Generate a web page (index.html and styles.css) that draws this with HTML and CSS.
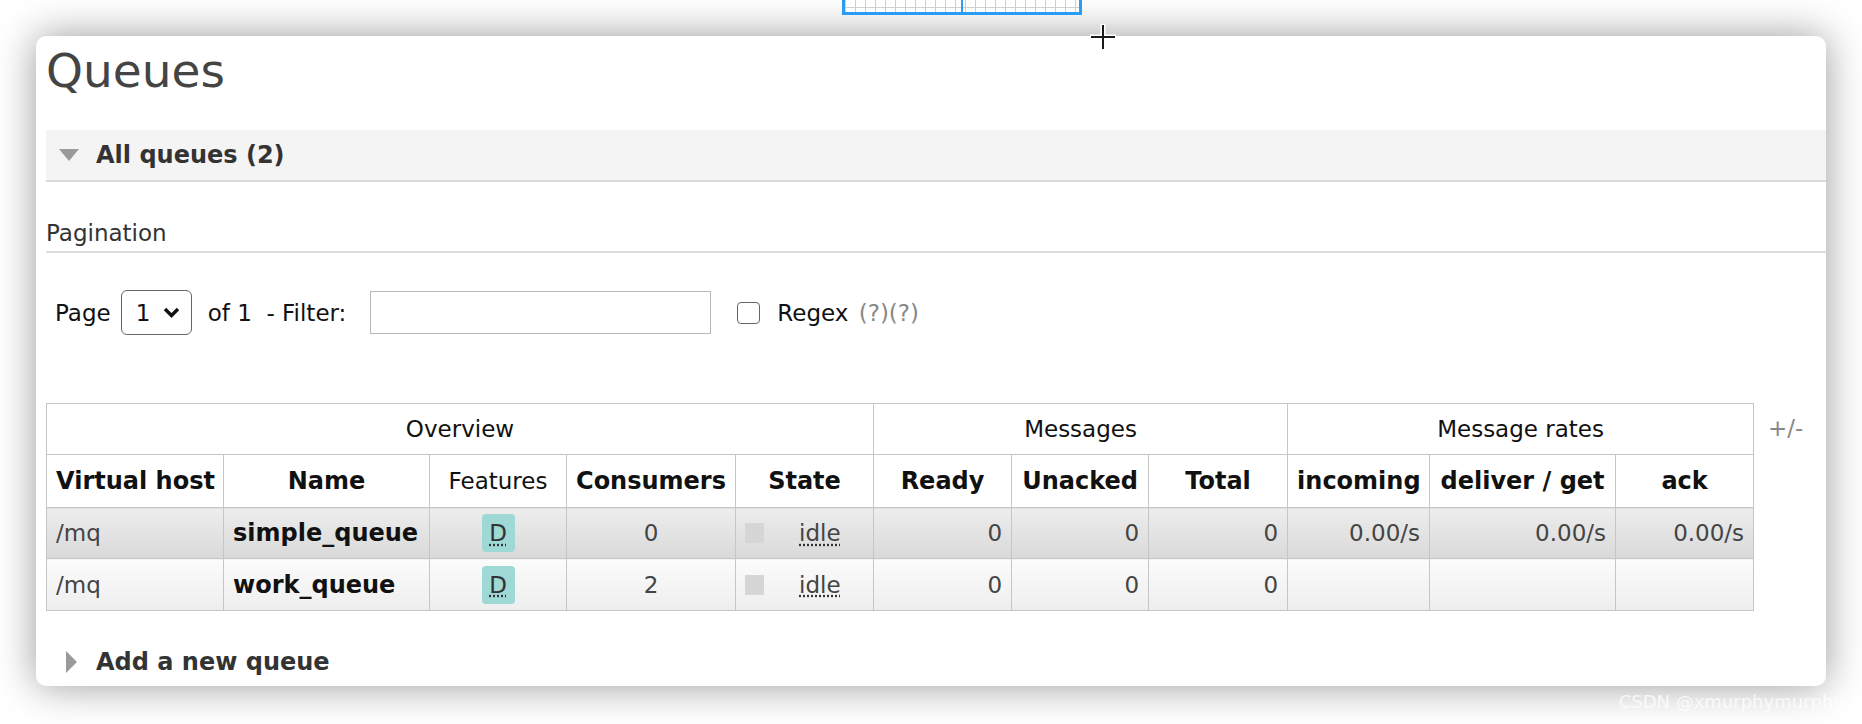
FILE: index.html
```html
<!DOCTYPE html>
<html lang="en">
<head>
  <meta charset="UTF-8">
  <title>Queues</title>
  <link rel="stylesheet" href="styles.css">
</head>
<body>
  <div class="grab"><span class="grab-split"></span></div>
  <svg class="cursor" width="28" height="28" viewBox="0 0 28 28">
    <path d="M14 1v26M1 14h26" stroke="#fff" stroke-width="5"/>
    <path d="M14 2v24M2 14h24" stroke="#1a1a1a" stroke-width="2"/>
  </svg>

  <div class="page">
    <div class="card">
      <h1>Queues</h1>

      <div class="section-head">
        <svg class="arrow" width="20" height="12" viewBox="0 0 20 12"><polygon points="0,0 20,0 10,12" fill="#9a9a9a"/></svg>
        <span>All queues (2)</span>
      </div>

      <h3 class="sub">Pagination</h3>
      <div class="pager">
        <span>Page</span>
        <span class="select">1
          <svg width="17" height="11" viewBox="0 0 17 11"><polyline points="2,2 8.5,8.5 15,2" fill="none" stroke="#111" stroke-width="3.4"/></svg>
        </span>
        <span class="of">of 1&nbsp; - Filter:</span>
        <input class="filter" type="text">
        <span class="check"></span>
        <span class="regex">Regex <span class="help">(?)(?)</span></span>
      </div>

      <div class="table-wrap">
        <table class="list">
          <colgroup>
            <col style="width:177px"><col style="width:206px"><col style="width:137px"><col style="width:169px"><col style="width:138px">
            <col style="width:138px"><col style="width:137px"><col style="width:139px">
            <col style="width:142px"><col style="width:186px"><col style="width:138px">
          </colgroup>
          <thead>
            <tr class="group">
              <th colspan="5">Overview</th>
              <th colspan="3">Messages</th>
              <th colspan="3">Message rates</th>
            </tr>
            <tr class="cols">
              <th>Virtual host</th>
              <th>Name</th>
              <th class="plain">Features</th>
              <th>Consumers</th>
              <th>State</th>
              <th>Ready</th>
              <th>Unacked</th>
              <th>Total</th>
              <th>incoming</th>
              <th>deliver / get</th>
              <th>ack</th>
            </tr>
          </thead>
          <tbody>
            <tr class="alt1">
              <td>/mq</td>
              <td class="name">simple_queue</td>
              <td class="c"><span class="badge"><abbr>D</abbr></span></td>
              <td class="c">0</td>
              <td><span class="state"><span class="dot"></span><abbr>idle</abbr></span></td>
              <td class="r">0</td>
              <td class="r">0</td>
              <td class="r">0</td>
              <td class="r">0.00/s</td>
              <td class="r">0.00/s</td>
              <td class="r">0.00/s</td>
            </tr>
            <tr class="alt2">
              <td>/mq</td>
              <td class="name">work_queue</td>
              <td class="c"><span class="badge"><abbr>D</abbr></span></td>
              <td class="c">2</td>
              <td><span class="state"><span class="dot"></span><abbr>idle</abbr></span></td>
              <td class="r">0</td>
              <td class="r">0</td>
              <td class="r">0</td>
              <td></td>
              <td></td>
              <td></td>
            </tr>
          </tbody>
        </table>
        <span class="toggle">+/-</span>
      </div>

      <div class="section-head closed">
        <svg class="arrow" width="11" height="22" viewBox="0 0 11 22"><polygon points="0,0 11,11 0,22" fill="#9a9a9a"/></svg>
        <span>Add a new queue</span>
      </div>
    </div>
  </div>

  <div class="watermark">CSDN @xmurphymurphy</div>
</body>
</html>
```

FILE: styles.css
```css
* {
  box-sizing: border-box;
}

html, body {
  margin: 0;
  height: 100%;
  overflow: hidden;
}

body {
  position: relative;
  background: #fff;
  font-family: "DejaVu Sans", Verdana, sans-serif;
  font-size: 23px;
  color: #222;
}

.page {
  padding: 36px 36px 0;
}

.card {
  height: 650px;
  padding: 7px 0 0 10px;
  background: #fff;
  border-radius: 10px;
  box-shadow: 0 0 40px rgba(0, 0, 0, 0.4);
  overflow: hidden;
}

h1 {
  margin: 0;
  font-size: 47px;
  line-height: 56px;
  font-weight: normal;
  color: #444;
}

.section-head {
  display: flex;
  align-items: center;
  height: 52px;
  margin-top: 31px;
  padding-left: 13px;
  background: #f4f4f4;
  border-bottom: 2px solid #dadada;
  font-size: 24px;
  font-weight: bold;
  color: #333;
}

.section-head .arrow {
  margin-right: 17px;
}

.section-head.closed {
  height: 50px;
  margin-top: 26px;
  padding-left: 20px;
  background: none;
  border-bottom: none;
}

.section-head.closed .arrow {
  margin-right: 19px;
}

.sub {
  margin: 37px 0 0;
  padding-bottom: 4px;
  font-size: 23px;
  line-height: 28px;
  font-weight: normal;
  color: #333;
  border-bottom: 2px solid #ddd;
}

.pager {
  display: flex;
  align-items: center;
  height: 45px;
  margin-top: 37px;
  padding-left: 9px;
  color: #111;
}

.select {
  display: flex;
  align-items: center;
  width: 71px;
  height: 45px;
  margin-left: 10px;
  padding-left: 14px;
  border: 1px solid #666;
  border-radius: 6px;
}

.select svg {
  margin-left: 13px;
}

.of {
  margin-left: 16px;
}

.filter {
  width: 341px;
  height: 43px;
  margin: 0 0 0 24px;
  padding: 0 6px;
  border: 1px solid #b8b8b8;
  font: inherit;
  outline: none;
}

.check {
  width: 23px;
  height: 22px;
  margin: 0 17px 0 26px;
  border: 1px solid #666;
  border-radius: 4px;
  background: #fff;
}

.regex {
  word-spacing: 3px;
}

.help {
  color: #888;
}

.table-wrap {
  display: flex;
  align-items: flex-start;
  margin-top: 68px;
}

.list {
  width: 1707px;
  table-layout: fixed;
  border-collapse: collapse;
}

.list th,
.list td {
  padding: 0 9px;
  border: 1px solid #c6c6c6;
  vertical-align: middle;
  white-space: nowrap;
}

.list th {
  font-size: 24px;
  font-weight: bold;
  color: #111;
  text-align: center;
}

.list .group th {
  height: 51px;
  font-size: 23px;
  font-weight: normal;
}

.list .cols th {
  height: 53px;
}

.list th.plain {
  font-size: 23px;
  font-weight: normal;
}

.list td {
  height: 51px;
  color: #444;
}

.list tr.alt1 td {
  background: linear-gradient(#ededed, #d9d9d9);
}

.list tr.alt2 td {
  height: 52px;
  background: linear-gradient(#fbfbfb, #eeeeee);
}

.list td.name {
  font-size: 24px;
  font-weight: bold;
  color: #111;
}

.list td.c {
  text-align: center;
}

.list td.r {
  text-align: right;
}

abbr {
  text-decoration: underline dotted #333;
  text-underline-offset: 3px;
}

.badge {
  display: inline-block;
  width: 33px;
  height: 38px;
  line-height: 38px;
  border-radius: 4px;
  background: #9ed9d6;
  color: #333;
}

.state {
  display: flex;
  align-items: center;
}

.dot {
  width: 19px;
  height: 20px;
  margin-right: 35px;
  background: #d6d6d6;
}

.toggle {
  margin-left: 14px;
  padding-top: 7px;
  line-height: 36px;
  color: #888;
}

.watermark {
  position: absolute;
  right: 18px;
  bottom: 12px;
  font-size: 18px;
  color: rgba(255, 255, 255, 0.75);
}

.grab {
  position: absolute;
  left: 842px;
  top: 0;
  width: 240px;
  height: 15px;
  border: 3px solid #2b9cf3;
  border-top: none;
  background-color: #fff;
  background-image:
    repeating-linear-gradient(90deg, #cfcfcf 0 1px, transparent 1px 10px),
    linear-gradient(transparent 7px, #cfcfcf 7px 8px, transparent 8px);
  z-index: 2;
}

.grab-split {
  position: absolute;
  left: 116px;
  top: 0;
  width: 2px;
  height: 100%;
  background: #2b9cf3;
}

.cursor {
  position: absolute;
  left: 1089px;
  top: 23px;
  z-index: 3;
}
```
